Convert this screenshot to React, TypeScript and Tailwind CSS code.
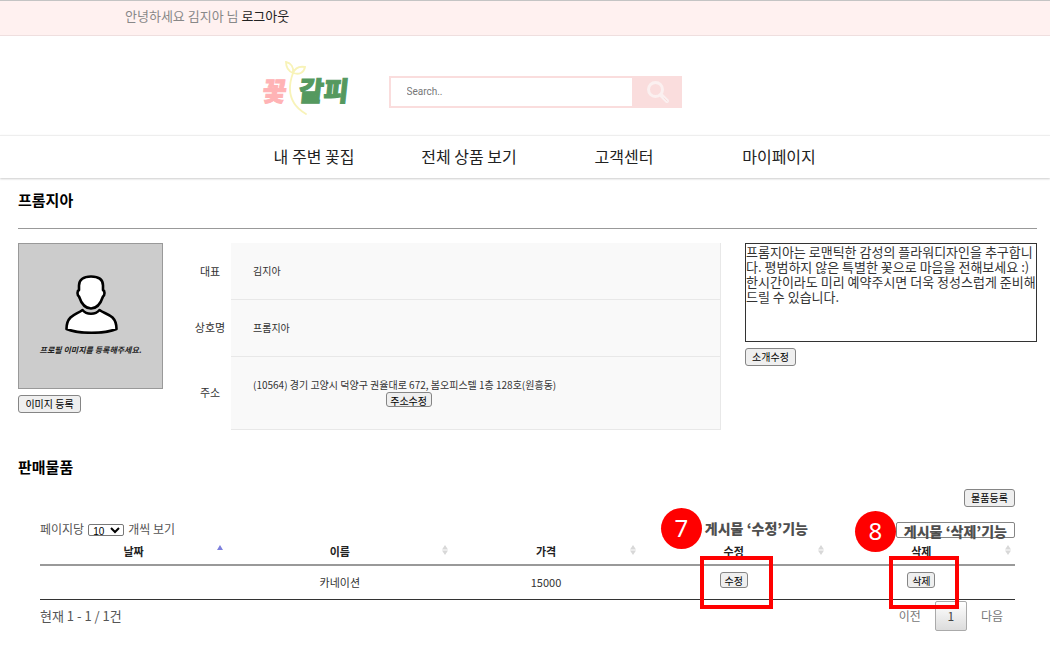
import React from "react";

const BUTTON =
  "rounded-[3px] border border-[#858585] bg-[#efefef] text-[10px] leading-4 text-black";

function Logo() {
  return (
    <a href="#" aria-label="꽃갈피" className="relative flex h-14 w-[86px] items-center justify-between pt-1">
      <svg viewBox="0 0 88 56" className="absolute left-0 top-0 h-14 w-[88px]" fill="none" stroke="#f8f3b8" strokeWidth="1.8" strokeLinecap="round">
        <path d="M30 13C26 24 26 35 31 43c3 5 7 8 12 11" />
        <path d="M30 13c-5-2-7-6-7-11 5 1 8 5 7 11Z" />
        <path d="M30 13c2-5 6-7 12-6-1 6-6 8-12 6Z" />
      </svg>
      <span className="-skew-x-6 text-[26px] font-black leading-8 text-[#ffb3b5] [-webkit-text-stroke:1px_#ffb3b5]">꽃</span>
      <span className="-skew-x-6 text-[27px] font-black leading-8 text-[#55995f] [-webkit-text-stroke:1px_#55995f]">갈피</span>
    </a>
  );
}

function SearchIcon() {
  return (
    <svg viewBox="0 0 24 24" className="h-6 w-6" fill="none" stroke="#fbf0f0">
      <circle cx="9.5" cy="9.5" r="7" strokeWidth="3" />
      <path d="m15 15 6 6" strokeWidth="4" strokeLinecap="round" />
      <path d="m18 18 3 3" stroke="#fadddd" strokeWidth="1" strokeLinecap="round" />
    </svg>
  );
}

function Profile() {
  return (
    <div className="flex h-[146px] w-[145px] flex-col items-center border border-[#999] bg-[#ccc] pt-[30px]">
      <svg viewBox="0 0 54 60" className="h-[60px] w-[54px]" fill="#fff" stroke="#000" strokeWidth="2.6" strokeLinejoin="round">
        <path d="M27 2.500c8 0 12 3.500 12 9v4.500c2 1 2 5 0 6.500-2 6-5 12-12 12s-10-6-12-12c-2-1.500-2-5.500 0-6.500v-4.500c0-5.500 4-9 12-9Z" />
        <path d="M18.500 36c4 5 13 5 17 0 4 3 9 4 13 7.500 3 3 4 6 4 11.500-12 5-38 5-50 0 0-5.500 1-8.500 4-11.500 4-3.500 8-4.500 12-7.500Z" />
      </svg>
      <p className="mt-2 text-[8px] font-bold italic leading-4 text-[#222]">프로필 이미지를 등록해주세요.</p>
    </div>
  );
}

function SortIcon({ active }: { active?: boolean }) {
  return (
    <svg viewBox="0 0 6 12" className="absolute right-1 top-1 h-3 w-1.5" aria-hidden="true">
      {active ? (
        <path d="M3 1 6 6H0Z" fill="#7d80dd" />
      ) : (
        <path d="M3 1 6 5.500H0ZM3 11 0 6.500h6Z" fill="#d8d8d8" />
      )}
    </svg>
  );
}

function Callout({ number, action, className }: { number: string; action: string; className: string }) {
  return (
    <div className={`absolute flex items-center ${className}`}>
      <span className="flex h-[41px] w-[41px] items-center justify-center rounded-full bg-[#f00] font-['Noto_Sans'] text-2xl text-white">
        {number}
      </span>
      <span className="whitespace-nowrap text-[14px] font-black leading-5 text-[#4f4f4f]">
        게시물 ‘{action}’기능
      </span>
    </div>
  );
}

const columns = ["날짜", "이름", "가격", "수정", "삭제"];
const nav = [
  { label: "내 주변 꽃집", cell: "w-[154px]" },
  { label: "전체 상품 보기", cell: "w-[156px]" },
  { label: "고객센터", cell: "w-[154px]" },
  { label: "마이페이지", cell: "w-[156px]" },
];

export default function App() {
  return (
    <div className="bg-white font-['Noto_Sans_CJK_KR',sans-serif] text-[#333]">
      <div className="flex h-9 items-center border-b border-t border-b-[#efdfdf] border-t-[#c4c4c4] bg-[#fff1f0] pb-1 pl-[125px] text-[13px] text-[#888]">
        <span>안녕하세요 김지아 님&nbsp;</span>
        <a href="#" className="text-[#222]">로그아웃</a>
      </div>

      <header>
        <div className="flex h-[99px] items-center pl-[25%]">
          <div className="pt-1"><Logo /></div>
          <form className="ml-10 mt-3 flex h-8 w-[293px]" onSubmit={(e) => e.preventDefault()}>
            <input
              aria-label="Search"
              placeholder="Search.."
              className="min-w-0 flex-1 border-2 border-[#fadddd] px-4 font-[Roboto] text-[10px] outline-none placeholder:text-[#777]"
            />
            <button aria-label="검색" className="flex w-12 items-center justify-center bg-[#fadddd]">
              <SearchIcon />
            </button>
          </form>
        </div>
        <nav className="flex h-[43px] items-center justify-center border-t border-[#eee] pb-0.5 pl-11 text-[16px] text-[#222] shadow-[0_1px_2px_#ccc]">
          {nav.map((item) => (
            <a key={item.label} href="#" className={`text-center ${item.cell}`}>{item.label}</a>
          ))}
        </nav>
      </header>

      <main className="pl-[18px] pr-[13px] pt-px">
        <h2 className="flex h-[50px] items-center border-b border-[#999] pb-1.5 text-[15px] font-bold text-black">프롬지아</h2>

        <section className="flex items-start pt-[14px]">
          <div>
            <Profile />
            <button className={`mt-1 w-[63px] ${BUTTON}`}>이미지 등록</button>
          </div>

          <table className="ml-[26px] flex-1 border-collapse text-[10px]">
            <tbody>
              <tr className="h-[56px]">
                <th className="w-[42px] text-[11px] font-normal">대표</th>
                <td className="border-b border-r border-[#e8e8e8] bg-[#f9f9f9] pl-[22px]">김지아</td>
              </tr>
              <tr className="h-[57px]">
                <th className="text-[11px] font-normal">상호명</th>
                <td className="border-b border-r border-[#e8e8e8] bg-[#f9f9f9] pl-[22px]">프롬지아</td>
              </tr>
              <tr className="h-[73px]">
                <th className="text-[11px] font-normal">주소</th>
                <td className="border-b border-r border-[#e8e8e8] bg-[#f9f9f9] pl-[22px]">
                  <div className="flex w-fit flex-col items-center">
                    <span className="leading-[14px]">(10564) 경기 고양시 덕양구 권율대로 672, 봄오피스텔 1층 128호(원흥동)</span>
                    <button className="mr-1 ml-3 h-[15px] w-[46px] overflow-hidden rounded-[3px] border border-[#858585] bg-[#efefef] text-[10px] leading-4 text-black">주소수정</button>
                  </div>
                </td>
              </tr>
            </tbody>
          </table>

          <div className="ml-6 w-[292px]">
            <textarea
              aria-label="소개"
              className="block h-[99px] w-full resize-none overflow-hidden border border-[#333] text-[13px] leading-[15px] outline-none"
              defaultValue={"프롬지아는 로맨틱한 감성의 플라워디자인을 추구합니다. 평범하지 않은 특별한 꽃으로 마음을 전해보세요 :)\n한시간이라도 미리 예약주시면 더욱 정성스럽게 준비해드릴 수 있습니다."}
            />
            <button className={`mt-0.5 w-[51px] ${BUTTON}`}>소개수정</button>
          </div>
        </section>

        <h2 className="mt-[25px] text-[15px] font-bold leading-6 text-black">판매물품</h2>

        <section className="relative pl-[22px] pr-[22px] pt-2.5">
          <div className="flex justify-end">
            <button className={`w-[51px] ${BUTTON}`}>물품등록</button>
          </div>
          <div className="flex h-[33px] items-end justify-between pb-px">
            <label className="flex items-center text-[12px] leading-5 text-[#555]">
              페이지당
              <select defaultValue="10" className="mx-1 mt-0.5 h-3 w-9 rounded-[2px] border border-[#777] bg-white font-['Liberation_Sans'] text-[10px] leading-3 text-black">
                <option>10</option>
                <option>25</option>
                <option>50</option>
              </select>
              개씩 보기
            </label>
            <input aria-label="검색어" className="mb-px h-4 w-[119px] rounded-[2px] border border-[#858585] px-1 text-[10px]" />
          </div>

          <table className="w-full table-fixed border-collapse text-[11px]">
            <colgroup>
              <col className="w-[19.2%]" />
              <col className="w-[23.1%]" />
              <col className="w-[19.2%]" />
              <col className="w-[19.3%]" />
              <col className="w-[19.2%]" />
            </colgroup>
            <thead>
              <tr className="h-[25px] border-b-2 border-[#999]">
                {columns.map((name, i) => (
                  <th key={name} className="relative pb-0.5 font-bold leading-4 text-[#222]">
                    {name}
                    <SortIcon active={i === 0} />
                  </th>
                ))}
              </tr>
            </thead>
            <tbody>
              <tr className="h-[35px] border-b border-[#333] text-center">
                <td></td>
                <td>카네이션</td>
                <td>15000</td>
                <td><button className="mx-auto mb-1 block h-4 w-7 overflow-hidden rounded-[3px] border border-[#858585] bg-[#efefef] text-[10px] leading-4 text-black">수정</button></td>
                <td><button className="mx-auto mb-1 block h-4 w-7 overflow-hidden rounded-[3px] border border-[#858585] bg-[#efefef] text-[10px] leading-4 text-black">삭제</button></td>
              </tr>
            </tbody>
          </table>

          <div className="flex items-center justify-between text-[12px] text-[#555]">
            <p className="text-[13px]">현재 1 - 1 / 1건</p>
            <div className="flex h-8 items-center pr-3 text-[#777]">
              <button>이전</button>
              <button className="ml-[14px] mr-[14px] h-[30px] w-8 rounded-[2px] border border-[#aaa] bg-gradient-to-b from-white to-[#dcdcdc] text-[#444]">1</button>
              <button>다음</button>
            </div>
          </div>

          <Callout number="7" action="수정" className="right-[229px] top-[29px] gap-[3px]" />
          <Callout number="8" action="삭제" className="right-[30px] top-[32px] gap-2" />
          <div className="pointer-events-none absolute right-[264px] top-[77px] h-[53px] w-[73px] border-4 border-[#f00]" />
          <div className="pointer-events-none absolute right-[78px] top-[77px] h-[53px] w-[70px] border-4 border-[#f00]" />
        </section>
      </main>
    </div>
  );
}
